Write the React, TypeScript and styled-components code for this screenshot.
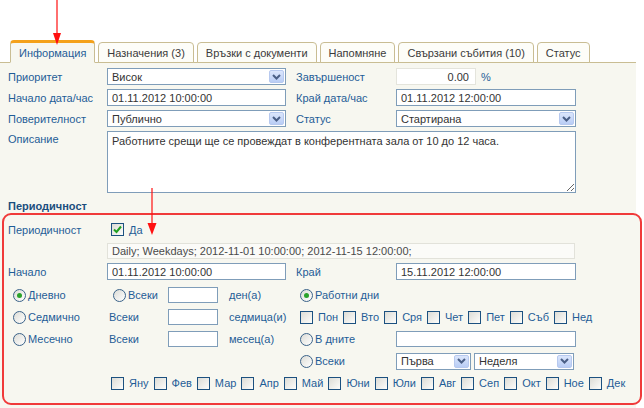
import styled, { createGlobalStyle } from 'styled-components'

const LABEL = '#1f5d97'
const FIELD_BORDER = '#7f9db9'
const TAN = '#c9bd93'

const GlobalStyle = createGlobalStyle`
	body {
		margin: 0;
		background: #fff;
		font-family: "Liberation Sans", Arial, sans-serif;
		font-size: 11px;
	}
	* { box-sizing: border-box; }
`

const tabs = ['Информация', 'Назначения (3)', 'Връзки с документи', 'Напомняне', 'Свързани събития (10)', 'Статус']
const weekdays = ['Пон', 'Вто', 'Сря', 'Чет', 'Пет', 'Съб', 'Нед']
const months = ['Яну', 'Фев', 'Мар', 'Апр', 'Май', 'Юни', 'Юли', 'Авг', 'Сеп', 'Окт', 'Ное', 'Дек']

/**
 * combo box drawn in the old XP style (text + blue arrow button)
 */
function Select({ value, width }: { value: string; width?: number }) {
	return (
		<SelectBox $width={width}>
			<span>{value}</span>
			<ArrowButton>
				<svg width="9" height="6" viewBox="0 0 9 6">
					<path d="M1 1 L4.5 4.5 L8 1" fill="none" stroke="#4a5f86" strokeWidth="2" />
				</svg>
			</ArrowButton>
		</SelectBox>
	)
}

function Check({ checked, label }: { checked?: boolean; label: string }) {
	return (
		<CheckLabel>
			<CheckBox>
				{checked && (
					<svg width="9" height="9" viewBox="0 0 9 9">
						<path d="M1 4.5 L3.5 7 L8 1.5" fill="none" stroke="#22a022" strokeWidth="2" />
					</svg>
				)}
			</CheckBox>
			<span>{label}</span>
		</CheckLabel>
	)
}

function Radio({ checked, label, $indent = 0 }: { checked?: boolean; label: string; $indent?: number }) {
	return (
		<RadioLabel $indent={$indent}>
			<RadioCircle>{checked && <Dot />}</RadioCircle>
			{label}
		</RadioLabel>
	)
}

export default function App() {
	return (
		<Page>
			<GlobalStyle />
			<TabBar>
				{tabs.map((t, i) => (
					<Tab key={t} $active={i === 0}>
						{t}
					</Tab>
				))}
			</TabBar>
			<Panel>
				<FormGrid>
					<Label>Приоритет</Label>
					<Select value="Висок" />
					<Label $right>Завършеност</Label>
					<PercentWrap>
						<PercentInput readOnly value="0.00" />
						<Label>%</Label>
					</PercentWrap>

					<Label>Начало дата/час</Label>
					<Field readOnly value="01.11.2012 10:00:00" />
					<Label $right>Край дата/час</Label>
					<Field readOnly value="01.11.2012 12:00:00" />

					<Label>Поверителност</Label>
					<Select value="Публично" />
					<Label $right>Статус</Label>
					<Select value="Стартирана" />

					<Label $top>Описание</Label>
					<TextArea readOnly value="Работните срещи ще се провеждат в конферентната зала от 10 до 12 часа." />
				</FormGrid>

				<SectionTitle>Периодичност</SectionTitle>

				<RecurBox>
					<FormGrid>
						<Label>Периодичност</Label>
						<CheckRow>
							<Check checked label="Да" />
						</CheckRow>
						<Summary>Daily; Weekdays; 2012-11-01 10:00:00; 2012-11-15 12:00:00;</Summary>
						<Label>Начало</Label>
						<Field readOnly value="01.11.2012 10:00:00" />
						<Label $right>Край</Label>
						<Field readOnly value="15.11.2012 12:00:00" />
					</FormGrid>

					<FreqGrid>
						<Radio checked label="Дневно" $indent={5} />
						<Radio label="Всеки" $indent={5} />
						<SmallInput readOnly />
						<Unit>ден(а)</Unit>
						<Wide>
							<Radio checked label="Работни дни" />
						</Wide>

						<Radio label="Седмично" $indent={5} />
						<Label $indent={1}>Всеки</Label>
						<SmallInput readOnly />
						<Unit>седмица(и)</Unit>
						<Wide>
							<CheckList>
								{weekdays.map((d) => (
									<Check key={d} label={d} />
								))}
							</CheckList>
						</Wide>

						<Radio label="Месечно" $indent={5} />
						<Label $indent={1}>Всеки</Label>
						<SmallInput readOnly />
						<Unit>месец(а)</Unit>
						<Radio label="В дните" />
						<DaysInput readOnly value="" />

						<Spacer />
						<Radio label="Всеки" />
						<SelectPair>
							<Select value="Първа" width={75} />
							<Select value="Неделя" width={100} />
						</SelectPair>

						<MonthRow>
							<CheckList>
								{months.map((m) => (
									<Check key={m} label={m} />
								))}
							</CheckList>
						</MonthRow>
					</FreqGrid>
				</RecurBox>
			</Panel>

			<Pointer $x={52} $y={0} $h={46}>
				<svg width="10" height="46" viewBox="0 0 10 46">
					<line x1="5" y1="0" x2="5" y2="36" stroke="#ff1010" strokeWidth="1.2" />
					<path d="M1 33 L9 33 L5 45 Z" fill="#ff1010" />
				</svg>
			</Pointer>
			<Pointer $x={147} $y={188} $h={48}>
				<svg width="10" height="48" viewBox="0 0 10 48">
					<line x1="5" y1="0" x2="5" y2="38" stroke="#ff1010" strokeWidth="1.2" />
					<path d="M0.5 35 L9.5 35 L5 47 Z" fill="#ff1010" />
				</svg>
			</Pointer>
		</Page>
	)
}

const Page = styled.div`
	position: relative;
	width: 644px;
	height: 408px;
	overflow: hidden;
	background: #fff;
`
const TabBar = styled.div`
	display: flex;
	align-items: flex-end;
	gap: 3px;
	width: 636px;
	height: 63px;
	padding-left: 10px;
	border-bottom: 1px solid ${TAN};
`
const Tab = styled.div<{ $active?: boolean }>`
	height: ${({ $active }) => ($active ? '23px' : '21px')};
	margin-bottom: -1px;
	padding: 0 8px;
	display: flex;
	align-items: center;
	border: 1px solid ${TAN};
	border-top: ${({ $active }) => ($active ? '3px solid #f4a11a' : `1px solid ${TAN}`)};
	border-bottom: ${({ $active }) => ($active ? '1px solid #f7f7f0' : `1px solid ${TAN}`)};
	border-radius: 4px 4px 0 0;
	background: ${({ $active }) => ($active ? '#f7f7f0' : '#fdfdf8')};
	color: ${({ $active }) => ($active ? LABEL : '#3b3b3b')};
	white-space: nowrap;
`
const Panel = styled.div`
	width: 636px;
	height: 345px;
	background: #f7f7f0;
	padding-top: 5px;
`
const FormGrid = styled.div`
	display: grid;
	grid-template-columns: 99px 179px 110px 180px;
	grid-auto-rows: 17px;
	row-gap: 4px;
	padding-left: 8px;
	align-items: center;
`
const Label = styled.div<{ $right?: boolean; $top?: boolean; $indent?: number }>`
	color: ${LABEL};
	white-space: nowrap;
	padding-left: ${({ $right, $indent }) => ($right ? 10 : $indent ?? 0)}px;
	align-self: ${({ $top }) => ($top ? 'start' : 'center')};
	padding-top: ${({ $top }) => ($top ? 2 : 0)}px;
`
const Field = styled.input`
	height: 17px;
	width: 100%;
	border: 1px solid ${FIELD_BORDER};
	background: #fff;
	padding: 0 4px;
	font: inherit;
	color: #333;
	outline: none;
`
const DaysInput = styled(Field)`
	width: 180px;
	height: 16px;
`
const PercentWrap = styled.div`
	display: flex;
	align-items: center;
	gap: 5px;
`
const PercentInput = styled(Field)`
	width: 80px;
	border-color: #e4e4dc;
	text-align: right;
	padding-right: 6px;
`
const SelectBox = styled.div<{ $width?: number }>`
	height: 17px;
	width: ${({ $width }) => ($width ? `${$width}px` : '100%')};
	border: 1px solid ${FIELD_BORDER};
	background: #fff;
	display: flex;
	align-items: center;
	justify-content: space-between;
	padding: 0 1px 0 4px;
	color: #333;
`
const ArrowButton = styled.div`
	width: 15px;
	height: 13px;
	border: 1px solid #b7c9ef;
	border-radius: 2px;
	background: linear-gradient(#dbe6fc, #b9cdf5);
	display: flex;
	align-items: center;
	justify-content: center;
`
const TextArea = styled.textarea`
	grid-column: 2 / span 3;
	grid-row: span 3;
	height: 62px;
	align-self: start;
	border: 1px solid ${FIELD_BORDER};
	background: #fff;
	padding: 3px 4px;
	font: inherit;
	color: #333;
	outline: none;
	resize: both;
`
const SectionTitle = styled.div`
	padding: 10px 0 0 8px;
	height: 22px;
	color: #1b4e7d;
	font-weight: bold;
	font-size: 11px;
`
const RecurBox = styled.div`
	margin-left: 2px;
	width: 640px;
	height: 192px;
	border: 2px solid #f03a3a;
	border-radius: 9px;
	background: #f7f7f0;
	padding-top: 6px;
	margin-top: 1px;
	& > ${FormGrid} {
		padding-left: 4px;
	}
`
const CheckRow = styled.div`
	grid-column: 2 / span 3;
	padding-left: 4px;
`
const Summary = styled.div`
	grid-column: 2 / span 3;
	height: 16px;
	width: 468px;
	border: 1px solid #e2e2da;
	background: #fbfbf8;
	color: #4a4a4a;
	padding: 0 4px;
	display: flex;
	align-items: center;
`
const FreqGrid = styled.div`
	display: grid;
	grid-template-columns: 100px 60px 50px 82px 96px 1fr;
	grid-auto-rows: 16px;
	row-gap: 6px;
	padding: 7px 0 0 4px;
	align-items: center;
`
const SmallInput = styled(Field)`
	height: 16px;
	width: 50px;
`
const Unit = styled.div`
	color: ${LABEL};
	padding-left: 11px;
	white-space: nowrap;
`
const Wide = styled.div`
	grid-column: 5 / span 2;
`
const Spacer = styled.div`
	grid-column: 1 / span 4;
`
const SelectPair = styled.div`
	display: flex;
	gap: 3px;
`
const MonthRow = styled.div`
	grid-column: 2 / span 5;
	padding-left: 3px;
`
const CheckList = styled.div`
	display: flex;
	align-items: center;
	gap: 5px;
`
const CheckLabel = styled.div`
	display: inline-flex;
	flex-shrink: 0;
	align-items: center;
	gap: 5px;
	color: ${LABEL};
	white-space: nowrap;
`
const CheckBox = styled.span`
	flex-shrink: 0;
	width: 13px;
	height: 13px;
	border: 1px solid #1c5180;
	background: linear-gradient(135deg, #dcdcd6, #fdfdfb);
	display: inline-flex;
	align-items: center;
	justify-content: center;
`
const RadioLabel = styled.div<{ $indent: number }>`
	display: flex;
	align-items: center;
	gap: 2px;
	margin-left: ${({ $indent }) => $indent}px;
	color: ${LABEL};
	white-space: nowrap;
`
const RadioCircle = styled.span`
	width: 13px;
	height: 13px;
	border-radius: 50%;
	border: 1px solid #3b6389;
	background: linear-gradient(135deg, #dcdcd6, #ffffff);
	display: inline-flex;
	align-items: center;
	justify-content: center;
`
const Dot = styled.span`
	width: 5px;
	height: 5px;
	border-radius: 50%;
	background: #2aa22a;
`
const Pointer = styled.div<{ $x: number; $y: number; $h: number }>`
	position: absolute;
	left: ${({ $x }) => $x}px;
	top: ${({ $y }) => $y}px;
	width: 10px;
	height: ${({ $h }) => $h}px;
	pointer-events: none;
	svg {
		display: block;
	}
`
